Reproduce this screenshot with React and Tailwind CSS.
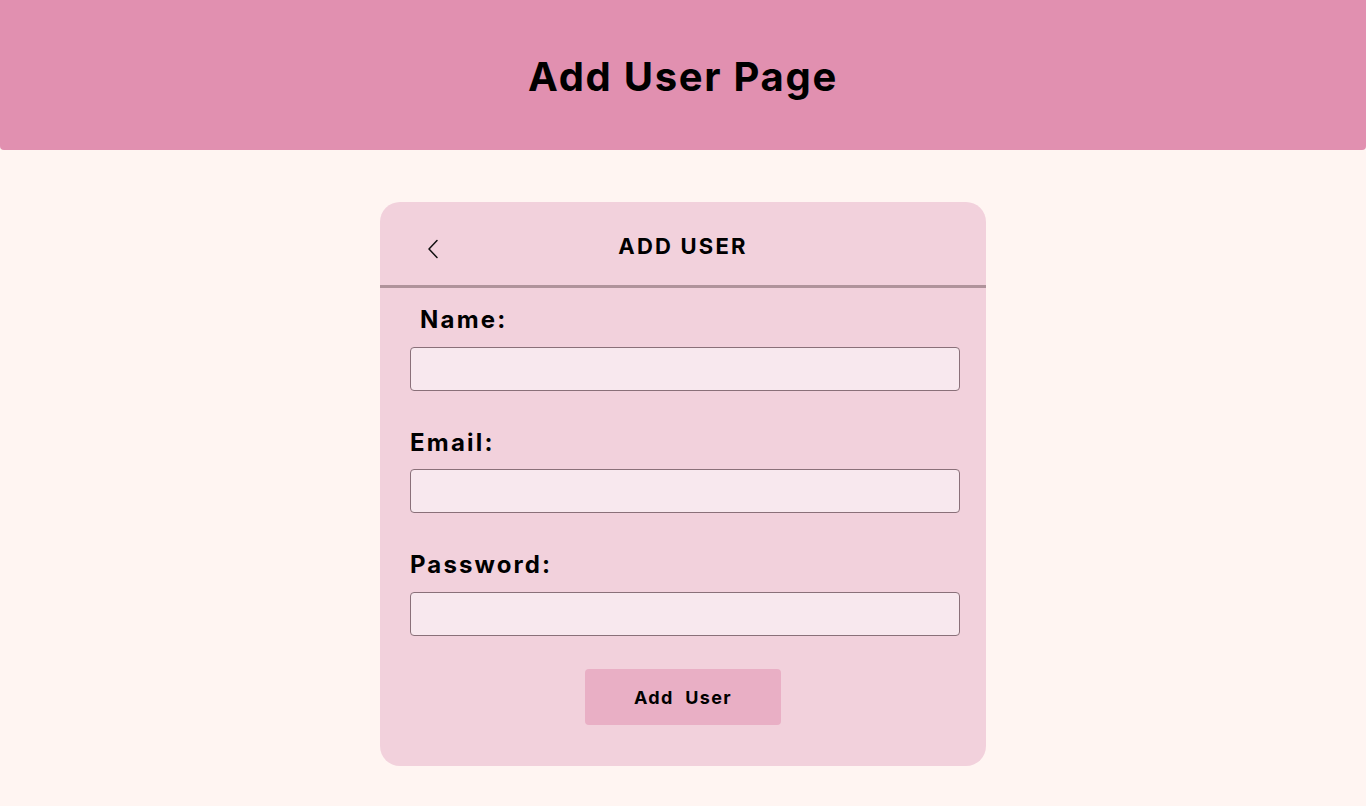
export default function App() {
  const font = { fontFamily: "Inter, 'Noto Sans', sans-serif" };
  return (
    <div className="min-h-[806px] w-full bg-[#fff5f2]" style={font}>
      <header className="h-[150px] w-full bg-[#e190b0] rounded-b-[4px] flex items-center justify-center">
        <h1 className="text-[40px] font-bold text-black leading-none tracking-[1.7px] mt-[3px]">Add User Page</h1>
      </header>
      <div className="flex justify-center pt-[52px]">
        <div className="w-[606px] h-[564px] bg-[#f2d1dc] rounded-[20px] flex flex-col">
          <div className="h-[83px] relative flex items-center justify-center">
            <svg className="absolute left-[46px] top-[37px]" width="14" height="20" viewBox="0 0 14 20" fill="none">
              <path d="M11 1.5 L3 10 L11 18.5" stroke="#111" strokeWidth="1.5" strokeLinecap="round" strokeLinejoin="round" />
            </svg>
            <span className="text-[22px] font-bold text-black mt-[6px] tracking-[2.2px]">ADD USER</span>
          </div>
          <div className="h-[3px] bg-[#b0939b]" />
          <div className="px-[30px] flex flex-col">
            <label className="mt-[17px] ml-[10px] text-[24px] font-bold leading-[30px] text-black tracking-[2.2px]">Name:</label>
            <input className="mt-[12px] h-[44px] w-[550px] bg-[#f8e8ee] border border-[#8a7079] rounded-[4px] outline-none" />
            <label className="mt-[37px] text-[24px] font-bold leading-[30px] text-black tracking-[2.2px]">Email:</label>
            <input className="mt-[11px] h-[44px] w-[550px] bg-[#f8e8ee] border border-[#8a7079] rounded-[4px] outline-none" />
            <label className="mt-[37px] text-[24px] font-bold leading-[30px] text-black tracking-[2.1px]">Password:</label>
            <input className="mt-[12px] h-[44px] w-[550px] bg-[#f8e8ee] border border-[#8a7079] rounded-[4px] outline-none" />
            <div className="flex justify-center mt-[33px]">
              <button className="w-[196px] h-[56px] bg-[#e9afc5] rounded-[4px] text-[18px] font-bold text-black whitespace-pre tracking-[1.4px]">Add  User</button>
            </div>
          </div>
        </div>
      </div>
    </div>
  );
}
